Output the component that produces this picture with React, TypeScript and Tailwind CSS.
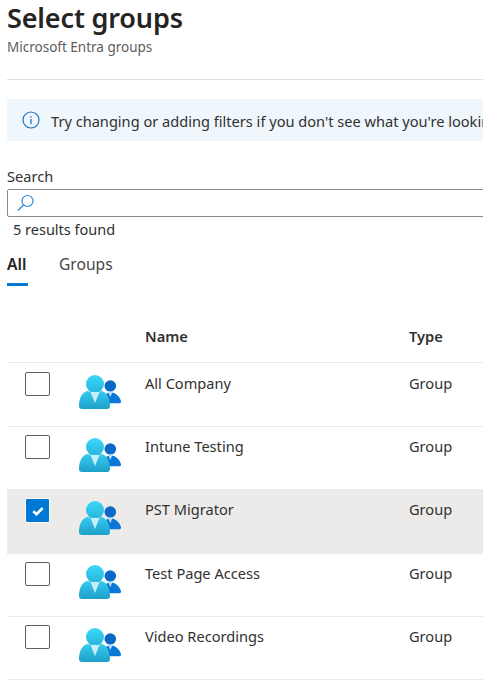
import React from "react";

function GroupIcon() {
  return (
    <svg width="44" height="38" viewBox="0 0 44 38" className="block">
      <defs>
        <linearGradient id="g1" x1="0" y1="0" x2="0" y2="1">
          <stop offset="0" stopColor="#3bd8f8" />
          <stop offset="1" stopColor="#28b4dc" />
        </linearGradient>
        <linearGradient id="g2" x1="0" y1="0" x2="0" y2="1">
          <stop offset="0" stopColor="#36cbee" />
          <stop offset="1" stopColor="#1f9fc9" />
        </linearGradient>
      </defs>
      <circle cx="31.300" cy="13" r="5.800" fill="#0a68c8" />
      <path d="M24 30.300c0-6 2.500-11 7.300-11s9.500 4 10.700 9c.3 1.300-.5 2-1.700 2z" fill="#0a78d6" />
      <path d="M28.800 18.500h5L31.300 24z" fill="#b5e3f5" />
      <circle cx="16" cy="11" r="9" fill="url(#g1)" />
      <path d="M0 33c0-6 2-13 8-15 2 1 13 1 15 0 6 2 8 9 8 15 0 2-1 3-3 3H3c-2 0-3-1-3-3z" fill="url(#g2)" />
      <path d="M11.500 19h9L16 30z" fill="#c6effa" />
    </svg>
  );
}

const rows = [
  { name: "All Company", cls: "h-[64px] pt-px border-[#edebe9]" },
  { name: "Intune Testing", cls: "h-[62px] border-transparent" },
  { name: "PST Migrator", cls: "h-[65px] pt-px bg-[#edebe9] border-[#edebe9]", selected: true },
  { name: "Test Page Access", cls: "h-[63px] border-[#edebe9]" },
  { name: "Video Recordings", cls: "h-[63px] border-[#edebe9]" },
];

export default function App() {
  return (
    <div className="w-[483px] h-[686px] overflow-hidden bg-white pl-[7px] font-['Noto_Sans','Open_Sans',sans-serif] text-[#323130]">
      <div className="w-[600px]">
        <h1 className="-mt-px h-[37px] text-[27px] leading-[37px] font-semibold text-[#252423] tracking-[-0.150px]">Select groups</h1>
        <div className="mt-[2px] h-[18px] text-[13.500px] leading-[18px] text-[#605e5c]">Microsoft Entra groups</div>
        <div className="mt-[23px] h-px bg-[#e1dfdd]" />
        <div className="mt-[19px] flex h-[42px] items-center bg-[#eff6fc] pl-[15px]">
          <svg width="18" height="18" viewBox="0 0 18 18" fill="none" className="shrink-0">
            <circle cx="9" cy="9" r="8" stroke="#0f6cbd" strokeWidth="1.100" />
            <rect x="8.400" y="8" width="1.200" height="5" fill="#0f6cbd" />
            <rect x="8.400" y="5.200" width="1.200" height="1.400" fill="#0f6cbd" />
          </svg>
          <span className="ml-[11px] mt-px whitespace-nowrap text-[14.600px] leading-5 text-[#323130]">Try changing or adding filters if you don't see what you're looking for.</span>
        </div>
        <div className="mt-[25px] h-[23px] text-[14.600px] leading-[20px]">Search</div>
        <div className="flex h-[28px] items-center rounded-[2px] border border-[#8a8886] pl-[9px]">
          <svg width="18" height="18" viewBox="0 0 18 18" fill="none">
            <circle cx="10.500" cy="7" r="5.500" stroke="#2b88d8" strokeWidth="1.200" />
            <path d="M6.500 11 1 16.500" stroke="#2b88d8" strokeWidth="1.200" />
          </svg>
        </div>
        <div className="ml-[6px] mt-[2px] h-[20px] text-[14.500px] leading-[20px]">5 results found</div>
        <div className="mt-[15px] flex h-[32px] text-[15.600px] leading-[20px]">
          <div className="flex w-[21px] flex-col justify-between">
            <span className="font-semibold text-[#252423]">All</span>
            <span className="block h-[3px] bg-[#0078d4]" />
          </div>
          <span className="ml-[31px] text-[#484644]">Groups</span>
        </div>
        <div className="mt-[23px] flex h-[54px] items-end border-b border-[#edebe9] pb-[16px] text-[14.700px] leading-[20px] font-semibold">
          <span className="ml-[138px] w-[264px]">Name</span>
          <span>Type</span>
        </div>
        {rows.map((r) => (
          <div key={r.name} className={`flex items-start border-b ${r.cls}`}>
            <div className="ml-[18px] mt-[8px] w-[54px]">
              {r.selected ? (
                <div className="flex h-[25px] w-[25px] items-center justify-center rounded-[2px] border border-white bg-[#0078d4]">
                  <svg width="14" height="12" viewBox="0 0 14 12" fill="none">
                    <path d="M2.300 6.200 5.500 9.200 11.700 3" stroke="white" strokeWidth="2.600" />
                  </svg>
                </div>
              ) : (
                <div className="h-[24px] w-[25px] rounded-[2px] border border-[#605e5c] bg-white" />
              )}
            </div>
            <div className="mt-[9px] w-[66px]"><GroupIcon /></div>
            <span className="mt-[9px] w-[264px] text-[14.600px] leading-[20px]">{r.name}</span>
            <span className="mt-[9px] text-[14.600px] leading-[20px]">Group</span>
          </div>
        ))}
      </div>
    </div>
  );
}
